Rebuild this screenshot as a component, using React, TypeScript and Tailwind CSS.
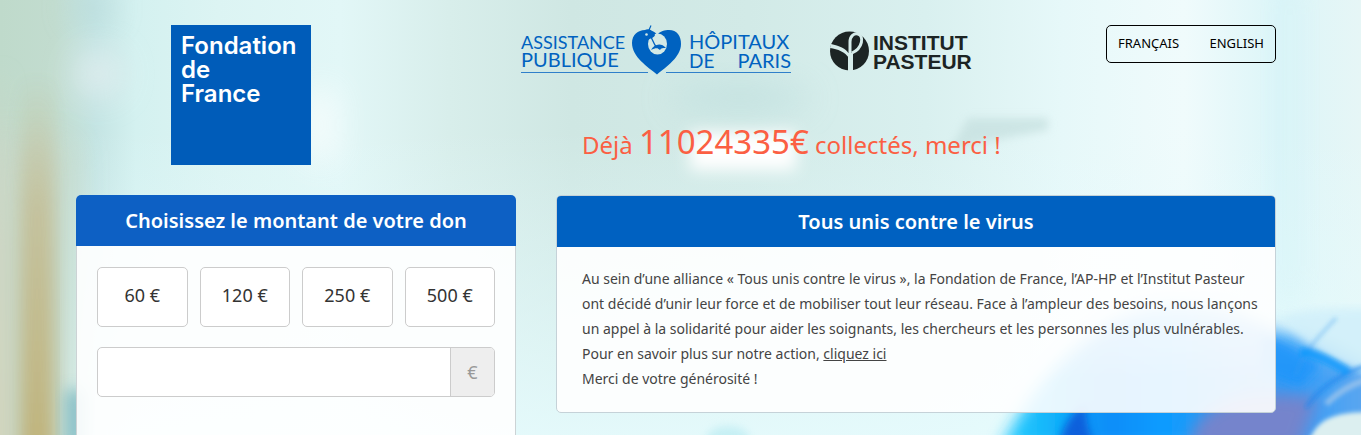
import type { ReactNode } from "react";

const amounts = [60, 120, 250, 500];

function Backdrop() {
  return (
    <svg
      className="absolute inset-0 h-full w-full"
      viewBox="0 0 1361 435"
      preserveAspectRatio="xMidYMid slice"
      aria-hidden="true"
    >
      <defs>
        <linearGradient id="wall" x1="0" x2="1" y1="0" y2="0">
          <stop offset="0" stopColor="#bfdacb" />
          <stop offset="0.04" stopColor="#c2dccf" />
          <stop offset="0.07" stopColor="#c4e4e3" />
          <stop offset="0.1" stopColor="#d4f1f0" />
          <stop offset="0.16" stopColor="#dcf4f3" />
          <stop offset="0.25" stopColor="#e2f7f7" />
          <stop offset="0.33" stopColor="#d8eeeb" />
          <stop offset="0.42" stopColor="#cfe7e3" />
          <stop offset="0.55" stopColor="#d2eae7" />
          <stop offset="0.68" stopColor="#d9f0ef" />
          <stop offset="0.78" stopColor="#e6f8f9" />
          <stop offset="0.87" stopColor="#f0fbfc" />
          <stop offset="0.94" stopColor="#dcf5f8" />
          <stop offset="1" stopColor="#e6f6f6" />
        </linearGradient>
        <linearGradient id="lift" x1="0" x2="0" y1="0" y2="1">
          <stop offset="0.3" stopColor="#e6fbfd" stopOpacity="0" />
          <stop offset="1" stopColor="#e6fbfd" stopOpacity="0.9" />
        </linearGradient>
        <linearGradient id="curtain" x1="0" x2="0" y1="0" y2="1">
          <stop offset="0.1" stopColor="#c4bd94" stopOpacity="0" />
          <stop offset="0.4" stopColor="#c4bd94" stopOpacity="0.9" />
          <stop offset="1" stopColor="#bfae70" />
        </linearGradient>
        <linearGradient id="edge" x1="0" x2="0" y1="0" y2="1">
          <stop offset="0.1" stopColor="#cdd6c4" stopOpacity="0" />
          <stop offset="0.5" stopColor="#cdd6c4" />
          <stop offset="1" stopColor="#d2d4bc" />
        </linearGradient>
        <linearGradient id="glove" gradientUnits="userSpaceOnUse" x1="1000" x2="1361" y1="0" y2="0">
          <stop offset="0" stopColor="#2cd0ff" />
          <stop offset="0.14" stopColor="#12b4fa" />
          <stop offset="0.3" stopColor="#0c8cf8" />
          <stop offset="0.45" stopColor="#0c9cff" />
          <stop offset="0.7" stopColor="#3d98ee" />
          <stop offset="0.8" stopColor="#2f9cf8" />
          <stop offset="1" stopColor="#5aa6f0" />
        </linearGradient>
        <linearGradient id="fade" x1="0" x2="0" y1="0" y2="1">
          <stop offset="0" stopColor="#fff" stopOpacity="0.1" />
          <stop offset="0.35" stopColor="#fff" stopOpacity="0.75" />
          <stop offset="0.6" stopColor="#fff" />
        </linearGradient>
        <mask id="gloveFade">
          <rect x="980" y="270" width="420" height="180" fill="url(#fade)" />
        </mask>
        <filter id="b2" x="-20%" y="-20%" width="140%" height="140%"><feGaussianBlur stdDeviation="2" /></filter>
        <filter id="b4" x="-20%" y="-30%" width="140%" height="160%"><feGaussianBlur stdDeviation="4" /></filter>
        <filter id="b8" x="-60%" y="-60%" width="220%" height="220%"><feGaussianBlur stdDeviation="8" /></filter>
        <filter id="b16" x="-200%" y="-60%" width="500%" height="220%"><feGaussianBlur stdDeviation="16" /></filter>
      </defs>
      <rect width="1361" height="435" fill="url(#wall)" />
      <rect x="60" width="1301" height="435" fill="url(#lift)" />
      <rect x="-20" y="140" width="94" height="340" fill="#c6d9cb" opacity="0.9" filter="url(#b16)" />
      <rect x="-20" y="20" width="32" height="440" fill="url(#edge)" filter="url(#b8)" />
      <rect x="20" y="30" width="34" height="440" fill="url(#curtain)" opacity="0.9" filter="url(#b8)" />
      <ellipse cx="98" cy="74" rx="24" ry="24" fill="#e4eff1" opacity="0.8" filter="url(#b16)" />
      <ellipse cx="92" cy="8" rx="20" ry="14" fill="#b3d8da" opacity="0.6" filter="url(#b16)" />
      <rect x="66" y="390" width="18" height="60" fill="#6cb0bc" opacity="0.8" filter="url(#b8)" />
      <rect x="308" y="90" width="26" height="70" fill="#ffffff" opacity="0.8" filter="url(#b16)" />
      <ellipse cx="740" cy="98" rx="70" ry="16" fill="#c0e0df" opacity="0.7" filter="url(#b16)" />
      <rect x="690" y="132" width="106" height="38" fill="#ffffff" filter="url(#b8)" />
      <path d="M968 118H1048V130L1000 139L950 150Z" fill="#c4dfde" opacity="0.7" filter="url(#b4)" />
      <rect x="1284" y="-20" width="12" height="320" fill="#caf0f5" opacity="0.6" filter="url(#b16)" />
      <g mask="url(#gloveFade)">
        <path
          d="M1000 450C1024 400 1060 356 1100 330C1140 300 1200 288 1276 330C1310 330 1340 350 1381 372V450Z"
          fill="url(#glove)"
          filter="url(#b8)"
        />
        <path d="M1058 450C1062 425 1072 412 1086 404C1086 424 1090 440 1100 450Z" fill="#0a50d4" opacity="0.8" filter="url(#b4)" />
        <path d="M1190 450C1190 406 1240 384 1318 398L1300 450Z" fill="#7484cc" filter="url(#b8)" />
      </g>
      <path d="M1262 336C1276 338 1300 350 1320 366L1300 386L1262 372Z" fill="#1e94fa" opacity="0.8" filter="url(#b4)" />
      <path d="M1280 318C1300 308 1330 308 1381 308V374C1345 372 1310 350 1280 318Z" fill="#d2f0fa" opacity="0.9" filter="url(#b4)" />
      <g fill="none" filter="url(#b2)">
        <path d="M1296 376C1302 352 1318 338 1336 318" stroke="#3a9cf0" strokeWidth="3" opacity="0.4" />
        <path d="M1306 408C1320 386 1342 374 1365 366" stroke="#1a86ee" strokeWidth="3" opacity="0.8" />
        <path d="M1300 352C1320 354 1335 364 1348 372" stroke="#0c98fc" strokeWidth="9" opacity="0.8" />
        <path d="M1326 404C1340 390 1352 384 1366 380" stroke="#9cc4ec" strokeWidth="6" opacity="0.8" />
      </g>
      <path d="M1306 450C1314 420 1330 412 1371 412V450Z" fill="#dceff0" filter="url(#b2)" />
      <ellipse cx="728" cy="440" rx="22" ry="14" fill="#b4e9f0" opacity="0.6" filter="url(#b4)" />
    </svg>
  );
}

function FondationLogo() {
  return (
    <div className="h-[140px] w-[140px] bg-[#005cb9] px-[10px] pt-[9px] font-['Inter',sans-serif] text-[24px] leading-[24px] font-semibold whitespace-nowrap text-white">
      Fondation
      <br />
      de
      <br />
      France
    </div>
  );
}

function HospitalsLogo() {
  return (
    <svg
      width="272"
      height="52"
      viewBox="0 0 272 52"
      role="img"
      aria-label="Assistance Publique Hôpitaux de Paris"
      fill="#0062c0"
      fontFamily="Lato, sans-serif"
      fontSize="19"
    >
      <text x="0" y="24" fontSize="18">ASSISTANCE</text>
      <text x="0" y="42" fontSize="20">PUBLIQUE</text>
      <text x="168" y="24" fontSize="20">HÔPITAUX</text>
      <text x="168" y="43">DE</text>
      <text x="270" y="43" textAnchor="end" fontSize="20">PARIS</text>
      <path d="M0 47.500H127M145 47.500H270" stroke="#2f7fca" fill="none" />
      <path d="M136 49.500C127 42 111 32 111 18C111 10 117 5 124 5C126 4 129 4 131 6C134 7 135 8 136 10C139 6 144 5 148 5C156 5 160 11 160 19C160 32 145 42 136 49.500Z" />
      <ellipse cx="136.500" cy="19" rx="9.500" ry="10.500" fill="#d3e9e6" />
      <path d="M124 6C128 4 133 6 134 10C133 13 130 13 127 15L123 14Z" />
      <circle cx="125.500" cy="9.500" r="1.300" fill="#d3e9e6" />
      <path d="M128 8C128 5 129 2 130 0.500M129 10C131 13 132 18 136 23" stroke="#0062c0" strokeWidth="1.300" fill="none" />
      <path d="M130 25C133 19 140 17 145 23C142 23 140 23 139 25L136 23C134 23 132 24 130 25Z" />
    </svg>
  );
}

function PasteurLogo() {
  return (
    <svg className="overflow-visible" width="144" height="40" viewBox="0 0 144 40" role="img" aria-label="Institut Pasteur">
      <circle cx="19.500" cy="20" r="19.500" fill="#1c2424" />
      <path d="M20.500 40V22" stroke="#d6ecea" strokeWidth="5" />
      <path d="M20 26V11C20 5 24 2 28 3C34 5 33 17 22 22" stroke="#d6ecea" strokeWidth="3" fill="none" />
      <path d="M1 13C9 15 16 17 19 23V27C15 21 8 18 0 17Z" fill="#d6ecea" />
      <g fill="#1c2424" fontFamily="'Liberation Sans', sans-serif" fontWeight="700" fontSize="21">
        <text x="43" y="19">INSTITUT</text>
        <text x="43" y="38">PASTEUR</text>
      </g>
    </svg>
  );
}

function CardTitle({ children, className }: { children: ReactNode; className: string }) {
  return (
    <h2 className={`py-3 text-center text-[20px] leading-[27px] font-semibold text-white ${className}`}>{children}</h2>
  );
}

export default function App() {
  return (
    <div className="relative isolate flex min-h-screen flex-col overflow-hidden pr-[9px] font-['Noto_Sans',sans-serif] text-[#444]">
      <Backdrop />
      <div className="relative mx-auto flex w-full max-w-[1200px] grow flex-col">
        <header className="grid grid-cols-[330px_1fr_auto] items-start pt-[25px]">
          <a href="#accueil" aria-label="Fondation de France" className="justify-self-center">
            <FondationLogo />
          </a>
          <div className="pl-[115px]">
            <div className="flex items-center gap-[37px]">
              <HospitalsLogo />
              <PasteurLogo />
            </div>
            <p className="mt-[42px] pl-[61px] text-[24px] leading-[46px] whitespace-nowrap text-[#fb5f43]">
              Déjà <span className="text-[33px]">11024335€</span> collectés, merci !
            </p>
          </div>
          <nav aria-label="Langue" className="flex h-[38px] w-[170px] items-center justify-between rounded-[5px] border border-black px-[11px] text-[13px] text-black">
            <a href="#fr">FRANÇAIS</a>
            <a href="#en">ENGLISH</a>
          </nav>
        </header>

        <main className="mt-[27px] grid grow grid-cols-[440px_1fr] gap-10">
          <form className="overflow-hidden rounded-t-[5px] bg-white/90" onSubmit={(e) => e.preventDefault()}>
            <CardTitle className="bg-[#0d60c4]">Choisissez le montant de votre don</CardTitle>
            <div className="h-full border-x border-[#ccd3d5] px-5 pt-[21px]">
              <div className="grid grid-cols-4 gap-3">
                {amounts.map((amount) => (
                  <button key={amount} type="button" className="h-[60px] rounded-[5px] border border-[#ccc] bg-white pb-1 text-[18px] text-[#333]">
                    {amount} €
                  </button>
                ))}
              </div>
              <div className="mt-5 flex h-[50px] overflow-hidden rounded-[5px] border border-[#ccc] bg-white">
                <input id="montant" aria-label="Montant libre" inputMode="decimal" className="min-w-0 flex-1 px-3 text-[18px] outline-none" />
                <label htmlFor="montant" className="flex w-11 items-center justify-center border-l border-[#ccc] bg-[#eee] text-[18px] text-[#999]">
                  €
                </label>
              </div>
            </div>
          </form>

          <section className="self-start overflow-hidden rounded-[5px] border border-[#c5d2d8] bg-white/90">
            <CardTitle className="bg-[#0061c1]">Tous unis contre le virus</CardTitle>
            <div className="pt-[19px] pr-[15px] pb-[21px] pl-[25px] text-[14px] leading-[25px]">
              <p>
                Au sein d’une alliance « Tous unis contre le virus », la Fondation de France, l’AP-HP et l’Institut Pasteur
                ont décidé d’unir leur force et de mobiliser tout leur réseau. Face à l’ampleur des besoins, nous lançons
                un appel à la solidarité pour aider les soignants, les chercheurs et les personnes les plus vulnérables.
              </p>
              <p>
                Pour en savoir plus sur notre action, <a href="#action" className="underline">cliquez ici</a>
              </p>
              <p>Merci de votre générosité !</p>
            </div>
          </section>
        </main>
      </div>
    </div>
  );
}
